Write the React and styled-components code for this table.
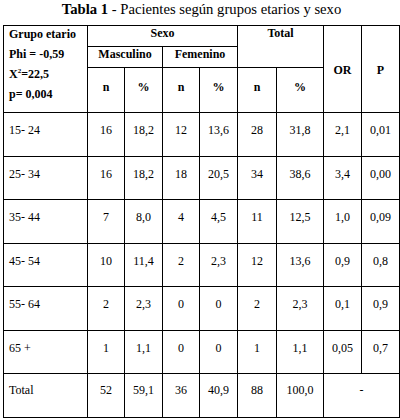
import React from "react";
import styled, { createGlobalStyle } from "styled-components";

const Global = createGlobalStyle`
  html, body { margin: 0; padding: 0; background: #fff; }
`;

const Page = styled.div`
  padding-left: 3px;
  width: 397px;
  font-family: "Liberation Serif", serif;
  color: #000;
`;

const Title = styled.div`
  height: 25px;
  font-size: 14.67px;
  line-height: 18px;
  text-align: center;
  white-space: nowrap;
  b { font-weight: 700; }
`;

const Grid = styled.div`
  display: grid;
  grid-template-columns: 83px 36px 37px 36px 37px 38px 46px 37px 37px;
  grid-template-rows: 20px 20px 44px 43px 42px 43px 42px 43px 42px 43px;
  gap: 1px;
  padding: 1px;
  background: #000;
  width: max-content;
`;

const Cell = styled.div`
  background: #fff;
  font-size: 12px;
  line-height: ${(p) => p.$lh || 16}px;
  font-weight: ${(p) => (p.$bold ? 700 : 400)};
  display: flex;
  flex-direction: column;
  align-items: ${(p) => (p.$left ? "flex-start" : "center")};
  justify-content: ${(p) => p.$v || "flex-start"};
  padding: ${(p) => p.$pt || 0}px 0 ${(p) => p.$pb || 0}px ${(p) => (p.$left ? 5 : 0)}px;
  grid-column: ${(p) => p.$col || "auto"};
  grid-row: ${(p) => p.$row || "auto"};
  white-space: nowrap;
`;

const Line = styled.span`
  display: block;
  margin-bottom: 4px;
`;

const Sup = styled.sup`
  font-size: 7px;
  vertical-align: 5px;
  line-height: 0;
`;

const rows = [
  ["15- 24", "16", "18,2", "12", "13,6", "28", "31,8", "2,1", "0,01"],
  ["25- 34", "16", "18,2", "18", "20,5", "34", "38,6", "3,4", "0,00"],
  ["35- 44", "7", "8,0", "4", "4,5", "11", "12,5", "1,0", "0,09"],
  ["45- 54", "10", "11,4", "2", "2,3", "12", "13,6", "0,9", "0,8"],
  ["55- 64", "2", "2,3", "0", "0", "2", "2,3", "0,1", "0,9"],
  ["65 +", "1", "1,1", "0", "0", "1", "1,1", "0,05", "0,7"],
];

const totals = ["Total", "52", "59,1", "36", "40,9", "88", "100,0"];

export default function App() {
  return (
    <>
      <Global />
      <Page>
        <Title>
          <b>Tabla 1</b> - Pacientes según grupos etarios y sexo
        </Title>
        <Grid>
          <Cell $bold $left $row="span 3">
            <Line>Grupo etario</Line>
            <Line>Phi = -0,59</Line>
            <Line>
              X<Sup>2</Sup>=22,5
            </Line>
            <Line>p= 0,004</Line>
          </Cell>
          <Cell $bold $lh={14} $col="span 4">Sexo</Cell>
          <Cell $bold $lh={14} $col="span 2" $row="span 2">Total</Cell>
          <Cell $bold $v="center" $pt={2} $row="span 3">OR</Cell>
          <Cell $bold $v="center" $pt={2} $row="span 3">P</Cell>
          <Cell $bold $lh={14} $col="span 2">Masculino</Cell>
          <Cell $bold $lh={14} $col="span 2">Femenino</Cell>
          {["n", "%", "n", "%", "n", "%"].map((t, i) => (
            <Cell key={i} $bold $pt={11}>{t}</Cell>
          ))}
          {rows.map((r, ri) =>
            r.map((v, ci) => (
              <Cell key={ri + "-" + ci} $left={ci === 0} $pt={9}>
                {v}
              </Cell>
            ))
          )}
          {totals.map((v, ci) => (
            <Cell key={"t" + ci} $left={ci === 0} $pt={8}>
              {v}
            </Cell>
          ))}
          <Cell $col="span 2" $pt={8}>-</Cell>
        </Grid>
      </Page>
    </>
  );
}
